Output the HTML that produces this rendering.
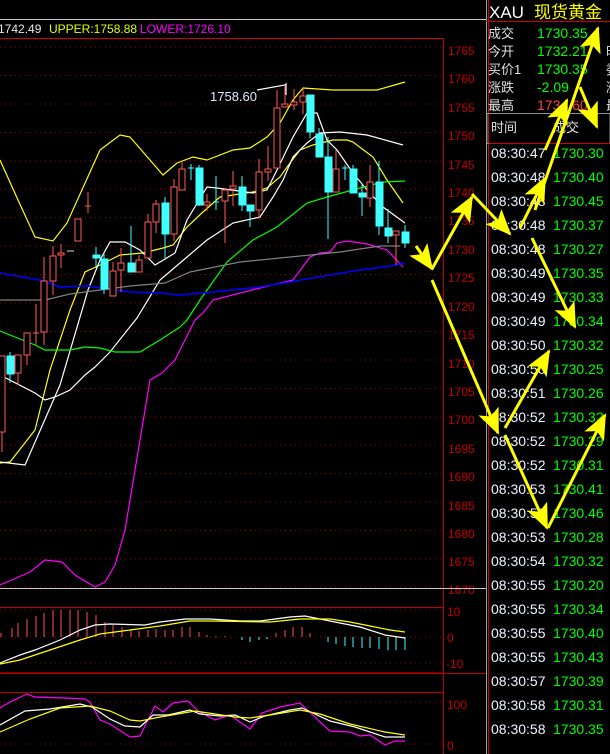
<!DOCTYPE html>
<html><head><meta charset="utf-8"><style>
html,body{margin:0;padding:0;background:#000;width:610px;height:754px;overflow:hidden}
svg{display:block}
text{font-family:"Liberation Sans","Noto Sans CJK SC",sans-serif}
</style></head><body>
<svg width="610" height="754" viewBox="0 0 610 754" xmlns="http://www.w3.org/2000/svg">
<defs>
<marker id="ah" markerUnits="userSpaceOnUse" markerWidth="26" markerHeight="22" refX="24" refY="11" orient="auto">
<path d="M0,0 L26,11 L0,22 L6,11 Z" fill="#ffff00"/></marker>
</defs>
<rect width="610" height="754" fill="#000"/>
<line x1="0" y1="19.5" x2="486" y2="19.5" stroke="#c8c8c8"/>
<text x="-2" y="33" font-size="12" fill="#e8e8e8">1742.49</text>
<text x="49" y="33" font-size="12" fill="#e0ff00">UPPER:1758.88</text>
<text x="140" y="33" font-size="12" fill="#ff00ff">LOWER:1726.10</text>
<line x1="0" y1="38.5" x2="443" y2="38.5" stroke="#d00000"/>
<line x1="443.5" y1="38" x2="443.5" y2="754" stroke="#c00000"/>
<g stroke="#a00000" stroke-dasharray="1,4">
<line x1="0" y1="47" x2="443" y2="47"/><line x1="0" y1="75.5" x2="443" y2="75.5"/><line x1="0" y1="104" x2="443" y2="104"/><line x1="0" y1="132.5" x2="443" y2="132.5"/><line x1="0" y1="161" x2="443" y2="161"/><line x1="0" y1="189" x2="443" y2="189"/><line x1="0" y1="217.5" x2="443" y2="217.5"/><line x1="0" y1="246" x2="443" y2="246"/><line x1="0" y1="274.5" x2="443" y2="274.5"/><line x1="0" y1="303" x2="443" y2="303"/><line x1="0" y1="331.5" x2="443" y2="331.5"/><line x1="0" y1="360" x2="443" y2="360"/><line x1="0" y1="388.5" x2="443" y2="388.5"/><line x1="0" y1="417" x2="443" y2="417"/><line x1="0" y1="445" x2="443" y2="445"/><line x1="0" y1="473.5" x2="443" y2="473.5"/><line x1="0" y1="502" x2="443" y2="502"/><line x1="0" y1="530.5" x2="443" y2="530.5"/><line x1="0" y1="559" x2="443" y2="559"/><line x1="0" y1="587" x2="443" y2="587"/>
</g>
<g font-size="12" fill="#c00000">
<text x="448" y="55">1765</text><text x="448" y="83">1760</text><text x="448" y="112">1755</text><text x="448" y="140">1750</text><text x="448" y="169">1745</text><text x="448" y="197">1740</text><text x="448" y="225">1735</text><text x="448" y="254">1730</text><text x="448" y="282">1725</text><text x="448" y="311">1720</text><text x="448" y="339">1715</text><text x="448" y="368">1710</text><text x="448" y="396">1705</text><text x="448" y="424">1700</text><text x="448" y="453">1695</text><text x="448" y="481">1690</text><text x="448" y="510">1685</text><text x="448" y="538">1680</text><text x="448" y="566">1675</text><text x="448" y="594">1670</text>
</g>
<line x1="0" y1="588.5" x2="486" y2="588.5" stroke="#c8c8c8"/>
<g fill="none" stroke-width="1.2">
<polyline stroke="#ffff00" points="0,160 18,200 35,237 53,241 67,223 100,150 120,135 130,137 163,175 177,163 193,157 207,160 233,150 250,148 267,137 280,123 293,100 303,88 333,90 377,90 405,82"/>
<polyline stroke="#ffff00" points="0,463 10,462 35,430 50,370 70,310 85,272 100,265 120,255 143,253 163,248 173,245 187,227 203,212 220,197 233,195 253,192 267,188 280,177 290,163 300,150 313,145 333,140 347,140 353,142 373,157 387,180 403,203"/>
<polyline stroke="#ff00ff" points="0,585 30,572 45,560 62,562 75,575 95,587 105,582 115,565 125,530 135,470 150,380 162,373 175,360 195,320 203,313 213,300 260,288 293,280 310,257 320,253 330,252 337,243 347,241 367,244 387,250 403,267"/>
<polyline stroke="#ffffff" points="0,462 25,465 60,385 88,290 100,260 110,242 125,242 140,250 155,265 175,253 187,220 207,187 217,188 253,193 267,190 277,170 293,137 307,113 317,113 327,140 337,150 353,173 367,190 383,207 405,223"/>
<polyline stroke="#ffffff" points="0,375 35,393 45,400 55,397 70,390 85,375 95,367 110,352 137,318 160,280 187,257 207,240 233,223 260,217 273,197 283,180 293,157 307,143 320,133 340,132 367,135 403,145"/>
<polyline stroke="#00ff00" points="0,331 35,345 45,350 70,350 85,347 100,348 115,352 140,352 160,340 180,327 187,320 200,300 227,262 253,240 277,227 307,203 327,197 360,188 383,182 405,181"/>
<polyline stroke="#0000ff" stroke-width="1.6" points="0,273 40,280 60,287 88,286 130,292 160,293 180,295 213,292 260,287 290,282 330,275 360,270 390,266 405,263"/>
<polyline stroke="#808080" points="0,300 45,300 70,294 130,286 165,283 190,272 240,262 290,257 340,252 380,246 400,246"/>
<polyline stroke="#ffffff" points="257,90 285,85 286,84 286,95"/>
</g>
<text x="210" y="101" font-size="13" fill="#e0e8ff">1758.60</text>
<g stroke="#ff5a5a" fill="#000" stroke-width="1">
<line x1="2" y1="356" x2="2" y2="452"/><rect x="-1" y="356" width="6" height="76"/>
<line x1="18" y1="355" x2="18" y2="385"/><rect x="15" y="355" width="6" height="18"/>
<line x1="27" y1="333" x2="27" y2="365"/><rect x="24" y="333" width="6" height="22"/>
<line x1="36" y1="304" x2="36" y2="345"/><line x1="33" y1="333" x2="39" y2="333"/>
<line x1="44" y1="257" x2="44" y2="345"/><rect x="41" y="281" width="6" height="51"/>
<line x1="53" y1="246" x2="53" y2="295"/><rect x="50" y="256" width="6" height="25"/>
<line x1="61" y1="244" x2="61" y2="268"/><rect x="58" y="253" width="6" height="2"/>
<line x1="78" y1="219" x2="78" y2="241"/><rect x="75" y="219" width="6" height="22"/>
<line x1="88" y1="192" x2="88" y2="213"/><line x1="85" y1="206" x2="91" y2="206"/>
<line x1="113" y1="262" x2="113" y2="296"/><rect x="110" y="271" width="6" height="25"/>
<line x1="121" y1="248" x2="121" y2="292"/><rect x="118" y="263" width="6" height="7"/>
<line x1="139" y1="255" x2="139" y2="272"/><rect x="136" y="260" width="6" height="12"/>
<line x1="148" y1="214" x2="148" y2="258"/><rect x="145" y="222" width="6" height="36"/>
<line x1="156" y1="200" x2="156" y2="233"/><rect x="153" y="204" width="6" height="18"/>
<line x1="174" y1="179" x2="174" y2="241"/><rect x="171" y="187" width="6" height="47"/>
<line x1="182" y1="161" x2="182" y2="190"/><rect x="179" y="169" width="6" height="21"/>
<line x1="207" y1="194" x2="207" y2="211"/><rect x="204" y="202" width="6" height="3"/>
<line x1="225" y1="188" x2="225" y2="243"/><rect x="222" y="190" width="6" height="11"/>
<line x1="233" y1="171" x2="233" y2="206"/><rect x="230" y="186" width="6" height="3"/>
<line x1="259" y1="159" x2="259" y2="219"/><rect x="256" y="172" width="6" height="38"/>
<line x1="268" y1="146" x2="268" y2="181"/><rect x="265" y="169" width="6" height="3"/>
<line x1="277" y1="90" x2="277" y2="168"/><rect x="274" y="108" width="6" height="60"/>
<line x1="285" y1="86" x2="285" y2="107"/><rect x="282" y="104" width="6" height="3"/>
<line x1="294" y1="89" x2="294" y2="110"/><rect x="291" y="102" width="6" height="3"/>
<line x1="303" y1="88" x2="303" y2="114"/><rect x="300" y="96" width="6" height="6"/>
<line x1="336" y1="150" x2="336" y2="192"/><rect x="333" y="169" width="6" height="23"/>
<line x1="370" y1="165" x2="370" y2="207"/><rect x="367" y="182" width="6" height="16"/>
<line x1="396" y1="232" x2="396" y2="265"/><rect x="393" y="231" width="6" height="4"/>
</g>
<line x1="67" y1="251" x2="74" y2="251" stroke="#ddd"/>
<g stroke="#40ffff" fill="#40ffff">
<line x1="10" y1="352" x2="10" y2="383"/><rect x="7" y="356" width="7" height="18"/>
<line x1="96" y1="247" x2="96" y2="268"/><rect x="93" y="255" width="7" height="3"/>
<line x1="104" y1="253" x2="104" y2="294"/><rect x="101" y="259" width="7" height="30"/>
<line x1="131" y1="226" x2="131" y2="272"/><rect x="128" y="263" width="7" height="9"/>
<line x1="165" y1="197" x2="165" y2="258"/><rect x="162" y="203" width="7" height="31"/>
<line x1="191" y1="164" x2="191" y2="180"/><line x1="188" y1="168" x2="194" y2="168"/>
<line x1="199" y1="165" x2="199" y2="206"/><rect x="196" y="168" width="7" height="37"/>
<line x1="216" y1="176" x2="216" y2="210"/><line x1="213" y1="202" x2="219" y2="202"/>
<line x1="242" y1="176" x2="242" y2="211"/><rect x="239" y="187" width="7" height="18"/>
<line x1="250" y1="205" x2="250" y2="227"/><rect x="247" y="205" width="7" height="6"/>
<line x1="310" y1="95" x2="310" y2="138"/><rect x="307" y="95" width="7" height="37"/>
<line x1="319" y1="128" x2="319" y2="157"/><rect x="316" y="134" width="7" height="23"/>
<line x1="328" y1="137" x2="328" y2="239"/><rect x="325" y="157" width="7" height="35"/>
<line x1="345" y1="165" x2="345" y2="180"/><line x1="342" y1="168" x2="348" y2="168"/>
<line x1="353" y1="165" x2="353" y2="193"/><rect x="350" y="169" width="7" height="24"/>
<line x1="362" y1="183" x2="362" y2="216"/><rect x="359" y="193" width="7" height="4"/>
<line x1="379" y1="161" x2="379" y2="235"/><rect x="376" y="182" width="7" height="44"/>
<line x1="388" y1="209" x2="388" y2="243"/><rect x="385" y="228" width="7" height="8"/>
<line x1="405" y1="225" x2="405" y2="248"/><rect x="402" y="232" width="7" height="11"/>
</g>
<rect x="-1" y="607.5" width="444.5" height="65.5" fill="none" stroke="#c00000"/>
<line x1="0" y1="673.5" x2="486" y2="673.5" stroke="#c00000"/>
<g stroke="#a00000" stroke-dasharray="1,4"><line x1="0" y1="610" x2="443" y2="610"/><line x1="0" y1="637" x2="443" y2="637"/><line x1="0" y1="663" x2="443" y2="663"/></g>
<g font-size="12" fill="#c00000"><text x="447" y="616">10</text><text x="447" y="642">0</text><text x="446" y="668">-10</text></g>
<g stroke="#ff5050">
<path d="M1 637V633M12 637V628M18 637V623M27 637V619M36 637V616M44 637V613M53 637V610M61 637V610M70 637V610M78 637V610M87 637V612M96 637V615M105 637V622M113 637V625M122 637V627M131 637V629M139 637V631M148 637V630M156 637V629M165 637V630M173 637V630M182 637V627M190 637V627M199 637V632M207 637V635M216 637V636M225 637V636M276 637V633M285 637V630M293 637V627M302 637V627M310 637V633"/>
</g>
<g stroke="#40ffff"><path d="M242 637V640M250 637V642M259 637V640M267 637V639M328 637V642M336 637V644M345 637V646M353 637V647M362 637V648M370 637V648M379 637V649M388 637V650M396 637V650M405 637V650"/></g>
<g fill="none" stroke-width="1.2">
<polyline stroke="#ffffff" points="0,663 20,655 35,650 60,640 80,630 95,625 110,624 145,625 160,622 185,619 210,619 240,621 260,621 290,617 305,616 320,619 340,623 360,627 385,635 405,638"/>
<polyline stroke="#ffff00" points="0,664 20,660 50,650 80,640 100,634 130,630 160,626 190,621 210,621 270,622 300,619 330,619 350,622 370,626 390,630 405,632"/>
</g>
<rect x="-1" y="692.5" width="444.5" height="70" fill="none" stroke="#c00000"/>
<g stroke="#a00000" stroke-dasharray="1,4"><line x1="0" y1="702" x2="443" y2="702"/><line x1="0" y1="744" x2="443" y2="744"/></g>
<g font-size="12" fill="#c00000"><text x="447" y="709">100</text><text x="447" y="750">0</text></g>
<g fill="none" stroke-width="1.2">
<polyline stroke="#ff00ff" points="0,708 10,702 27,694 35,697 65,698 85,699 90,702 100,720 110,724 130,737 140,736 155,706 163,712 173,703 188,701 198,711 215,720 230,715 250,729 262,713 280,707 300,703 318,720 330,731 350,732 360,736 370,735 385,745 395,741 405,741"/>
<polyline stroke="#ffffff" points="0,725 25,711 50,709 80,704 92,707 110,719 125,726 140,727 153,715 168,715 190,710 200,714 220,716 235,715 250,722 265,716 290,710 302,708 330,721 355,727 385,737 405,737"/>
<polyline stroke="#ffff00" points="0,732 30,719 60,708 90,706 110,711 130,720 140,721 160,717 195,711 235,717 250,718 270,715 300,710 320,714 350,724 385,732 405,735"/>
</g>
<line x1="486.5" y1="0" x2="486.5" y2="754" stroke="#a0a0a0"/>
<line x1="488.5" y1="0" x2="488.5" y2="754" stroke="#d00000"/>
<text x="489" y="18" font-size="17" fill="#ffffff">XAU</text>
<text x="534" y="18" font-size="17" fill="#ffff00">现货黄金</text>
<line x1="486" y1="21.5" x2="610" y2="21.5" stroke="#d00000"/>
<g font-size="13" fill="#e0e0e0"><text x="488" y="38">成交</text><text x="488" y="56">今开</text><text x="488" y="74">买价1</text><text x="488" y="92">涨跌</text><text x="488" y="110">最高</text>
<text x="606" y="56">时</text><text x="606" y="74">委</text><text x="606" y="92">涨</text><text x="606" y="110">最</text></g>
<g font-size="14" fill="#00ff00"><text x="537" y="38">1730.35</text><text x="537" y="56">1732.21</text><text x="537" y="74">1730.35</text><text x="537" y="92">-2.09</text></g>
<text x="537" y="110" font-size="14" fill="#ff4040">1734.60</text>
<rect x="487" y="113.5" width="123" height="30" fill="none" stroke="#909090"/>
<line x1="489" y1="143.5" x2="610" y2="143.5" stroke="#d00000"/>
<text x="491" y="132" font-size="13" fill="#e0e0e0">时间</text>
<text x="553" y="132" font-size="13" fill="#e0e0e0">成交</text>
<g font-size="14" fill="#eef4ff">
<text x="491" y="158">08:30:47</text><text x="491" y="182">08:30:48</text><text x="491" y="206">08:30:48</text><text x="491" y="230">08:30:48</text><text x="491" y="254">08:30:48</text><text x="491" y="278">08:30:49</text><text x="491" y="302">08:30:49</text><text x="491" y="326">08:30:49</text><text x="491" y="350">08:30:50</text><text x="491" y="374">08:30:50</text><text x="491" y="398">08:30:51</text><text x="491" y="422">08:30:52</text><text x="491" y="446">08:30:52</text><text x="491" y="470">08:30:52</text><text x="491" y="494">08:30:53</text><text x="491" y="518">08:30:53</text><text x="491" y="542">08:30:53</text><text x="491" y="566">08:30:54</text><text x="491" y="590">08:30:55</text><text x="491" y="614">08:30:55</text><text x="491" y="638">08:30:55</text><text x="491" y="662">08:30:55</text><text x="491" y="686">08:30:57</text><text x="491" y="710">08:30:58</text><text x="491" y="734">08:30:58</text>
</g>
<g font-size="14" fill="#00ff00">
<text x="553" y="158">1730.30</text><text x="553" y="182">1730.40</text><text x="553" y="206">1730.45</text><text x="553" y="230">1730.37</text><text x="553" y="254">1730.27</text><text x="553" y="278">1730.35</text><text x="553" y="302">1730.33</text><text x="553" y="326">1730.34</text><text x="553" y="350">1730.32</text><text x="553" y="374">1730.25</text><text x="553" y="398">1730.26</text><text x="553" y="422">1730.32</text><text x="553" y="446">1730.29</text><text x="553" y="470">1730.31</text><text x="553" y="494">1730.41</text><text x="553" y="518">1730.46</text><text x="553" y="542">1730.28</text><text x="553" y="566">1730.32</text><text x="553" y="590">1730.20</text><text x="553" y="614">1730.34</text><text x="553" y="638">1730.40</text><text x="553" y="662">1730.43</text><text x="553" y="686">1730.39</text><text x="553" y="710">1730.31</text><text x="553" y="734">1730.35</text>
</g>
<g stroke="#ffff00" stroke-width="3" marker-end="url(#ah)" fill="none">
<line x1="416" y1="246" x2="432" y2="269"/>
<line x1="432" y1="269" x2="472" y2="197"/>
<line x1="472" y1="194" x2="510" y2="234"/>
<line x1="520" y1="228" x2="545" y2="178"/>
<line x1="532" y1="238" x2="575" y2="327"/>
<line x1="432" y1="280" x2="498" y2="433"/>
<line x1="505" y1="428" x2="549" y2="351"/>
<line x1="505" y1="435" x2="547" y2="528"/>
<line x1="548" y1="528" x2="605" y2="415"/>
<line x1="535" y1="210" x2="598" y2="28"/>
<line x1="545" y1="150" x2="567" y2="100"/>
<line x1="580" y1="87" x2="597" y2="127"/>
</g>
</svg>
</body></html>
